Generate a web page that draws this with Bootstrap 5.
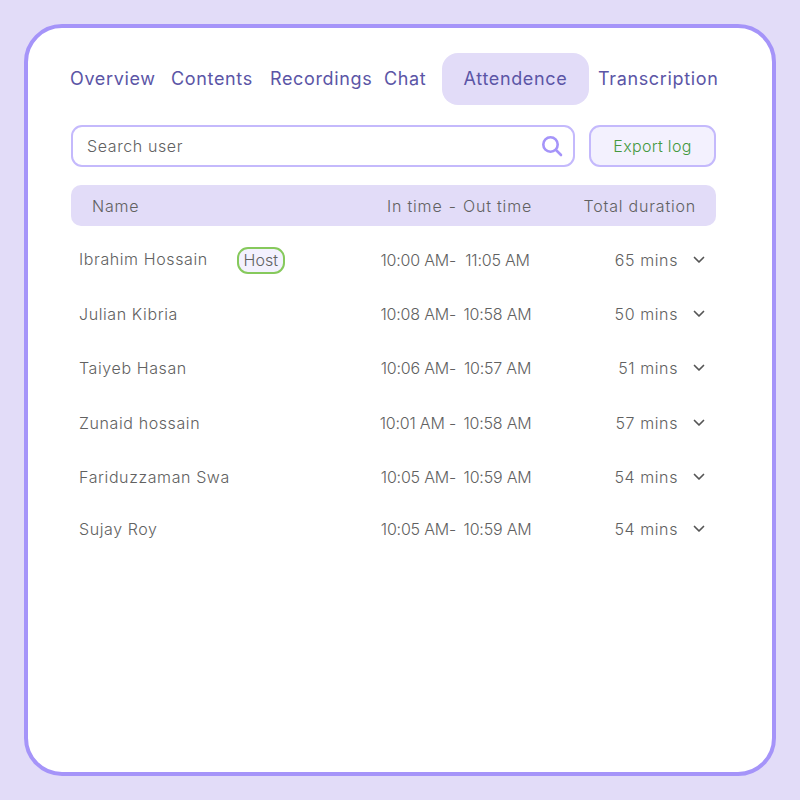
<!DOCTYPE html>
<html lang="en">
<head>
  <meta charset="UTF-8" />
  <meta name="viewport" content="width=device-width, initial-scale=1.0" />
  <title>Attendence</title>
  <link href="https://cdn.jsdelivr.net/npm/bootstrap@5.3.3/dist/css/bootstrap.min.css" rel="stylesheet" />
  <style>
    body {
      background-color: #E2DCF8;
      font-family: "Inter", "Noto Sans", sans-serif;
      font-weight: 300;
      font-size: 16px;
      letter-spacing: .6px;
      color: #616161;
      min-height: 800px;
      padding: 24px;
    }
    .frame {
      height: 752px;
      background: #fff;
      border: 4px solid #A594F9;
      border-radius: 38px;
      padding: 25px 56px 0 43px;
    }
    .tabs { height: 52px; width: 660px; margin-left: -1px; }
    .tabs .nav-link {
      color: #5B55A6;
      font-weight: 400;
      font-size: 18px;
      padding: 0;
      letter-spacing: .65px;
      line-height: 52px;
      white-space: nowrap;
    }
    .tabs .nav-link.active {
      background: #E2DCF8;
      color: #5B55A6;
      border-radius: 16px;
      width: 147px;
      text-align: center;
    }
    .tab-overview { width: 101px; }
    .tab-contents { width: 99px; }
    .tab-recordings { width: 114px; }
    .tab-chat { width: 58px; }
    .tab-active { width: 156px; }
    .tools { margin-top: 20px; width: 645px; gap: 14px; }
    .search-box {
      height: 42px;
      border: 2px solid #C4B9FC;
      border-radius: 11px;
      padding: 0 10px 0 14px;
    }
    .search-box input {
      border: 0;
      outline: 0;
      padding: 0;
      background: transparent;
      font-size: 16px;
      font-weight: 300;
      letter-spacing: .6px;
      color: #616161;
    }
    .search-box input::placeholder { color: #616161; opacity: 1; }
    .btn-export {
      width: 127px;
      height: 42px;
      padding: 0;
      background: #F3F1FE;
      border: 2px solid #C4B9FC;
      border-radius: 11px;
      color: #44993F;
      font-size: 16px;
      font-weight: 300;
      letter-spacing: .3px;
    }
    .head-bar {
      margin-top: 18px;
      width: 645px;
      height: 41px;
      background: #E2DCF8;
      border-radius: 10px;
      letter-spacing: .8px;
    }
    .head-name { width: 316px; padding-left: 21px; }
    .head-times { width: 145px; }
    .head-total { width: 164px; text-align: right; }
    .att-list { width: 645px; margin-top: 7px; }
    .att-row { height: 54.2px; }
    .att-row.short { height: 50px; }
    .att-name { width: 301px; padding-left: 8px; }
    .host-tag {
      display: inline-block;
      border: 2px solid #86C95C;
      border-radius: 11px;
      background: #F3F1FE;
      height: 27px;
      width: 48px;
      text-align: center;
      line-height: 23px;
      letter-spacing: 0;
      margin-left: 29px;
      vertical-align: -1px;
    }
    .att-in { width: 84px; text-align: right; white-space: nowrap; letter-spacing: -.2px; }
    .att-out { width: 83px; text-align: center; white-space: nowrap; letter-spacing: -.2px; }
    .att-dur { width: 139px; text-align: right; white-space: nowrap; }
    .att-chev { margin-left: 15px; }
  </style>
</head>
<body>
  <div class="frame">
    <ul class="nav tabs flex-nowrap">
      <li class="nav-item tab-overview"><a class="nav-link" href="#">Overview</a></li>
      <li class="nav-item tab-contents"><a class="nav-link" href="#">Contents</a></li>
      <li class="nav-item tab-recordings"><a class="nav-link" href="#">Recordings</a></li>
      <li class="nav-item tab-chat"><a class="nav-link" href="#">Chat</a></li>
      <li class="nav-item tab-active"><a class="nav-link active" href="#">Attendence</a></li>
      <li class="nav-item"><a class="nav-link" href="#">Transcription</a></li>
    </ul>

    <div class="d-flex tools">
      <div class="search-box d-flex align-items-center flex-grow-1">
        <input type="text" class="flex-grow-1" placeholder="Search user" />
        <svg width="22" height="22" viewBox="0 0 22 22" fill="none" stroke="#A594F9" stroke-width="2.6" stroke-linecap="round">
          <circle cx="9.5" cy="9.5" r="7.2" />
          <line x1="15" y1="15" x2="20" y2="20" />
        </svg>
      </div>
      <button type="button" class="btn btn-export">Export log</button>
    </div>

    <div class="head-bar d-flex align-items-center">
      <div class="head-name">Name</div>
      <div class="head-times d-flex justify-content-between"><span>In time</span><span>-</span><span>Out time</span></div>
      <div class="head-total">Total duration</div>
    </div>

    <div class="att-list">
      <div class="att-row d-flex align-items-center">
        <div class="att-name">Ibrahim Hossain<span class="host-tag">Host</span></div>
        <div class="att-in">10:00 AM-</div>
        <div class="att-out">11:05 AM</div>
        <div class="att-dur">65 mins</div>
        <svg class="att-chev" width="12" height="8" viewBox="0 0 12 8" fill="none" stroke="#555" stroke-width="1.7" stroke-linecap="round" stroke-linejoin="round"><path d="M1.5 1.5 6 6l4.5-4.5" /></svg>
      </div>
      <div class="att-row d-flex align-items-center">
        <div class="att-name">Julian Kibria</div>
        <div class="att-in">10:08 AM-</div>
        <div class="att-out">10:58 AM</div>
        <div class="att-dur">50 mins</div>
        <svg class="att-chev" width="12" height="8" viewBox="0 0 12 8" fill="none" stroke="#555" stroke-width="1.7" stroke-linecap="round" stroke-linejoin="round"><path d="M1.5 1.5 6 6l4.5-4.5" /></svg>
      </div>
      <div class="att-row d-flex align-items-center">
        <div class="att-name">Taiyeb Hasan</div>
        <div class="att-in">10:06 AM-</div>
        <div class="att-out">10:57 AM</div>
        <div class="att-dur">51 mins</div>
        <svg class="att-chev" width="12" height="8" viewBox="0 0 12 8" fill="none" stroke="#555" stroke-width="1.7" stroke-linecap="round" stroke-linejoin="round"><path d="M1.5 1.5 6 6l4.5-4.5" /></svg>
      </div>
      <div class="att-row d-flex align-items-center">
        <div class="att-name">Zunaid hossain</div>
        <div class="att-in">10:01 AM -</div>
        <div class="att-out">10:58 AM</div>
        <div class="att-dur">57 mins</div>
        <svg class="att-chev" width="12" height="8" viewBox="0 0 12 8" fill="none" stroke="#555" stroke-width="1.7" stroke-linecap="round" stroke-linejoin="round"><path d="M1.5 1.5 6 6l4.5-4.5" /></svg>
      </div>
      <div class="att-row d-flex align-items-center">
        <div class="att-name">Fariduzzaman Swa</div>
        <div class="att-in">10:05 AM-</div>
        <div class="att-out">10:59 AM</div>
        <div class="att-dur">54 mins</div>
        <svg class="att-chev" width="12" height="8" viewBox="0 0 12 8" fill="none" stroke="#555" stroke-width="1.7" stroke-linecap="round" stroke-linejoin="round"><path d="M1.5 1.5 6 6l4.5-4.5" /></svg>
      </div>
      <div class="att-row short d-flex align-items-center">
        <div class="att-name">Sujay Roy</div>
        <div class="att-in">10:05 AM-</div>
        <div class="att-out">10:59 AM</div>
        <div class="att-dur">54 mins</div>
        <svg class="att-chev" width="12" height="8" viewBox="0 0 12 8" fill="none" stroke="#555" stroke-width="1.7" stroke-linecap="round" stroke-linejoin="round"><path d="M1.5 1.5 6 6l4.5-4.5" /></svg>
      </div>
    </div>
  </div>

  <script src="https://cdn.jsdelivr.net/npm/bootstrap@5.3.3/dist/js/bootstrap.bundle.min.js"></script>
</body>
</html>
